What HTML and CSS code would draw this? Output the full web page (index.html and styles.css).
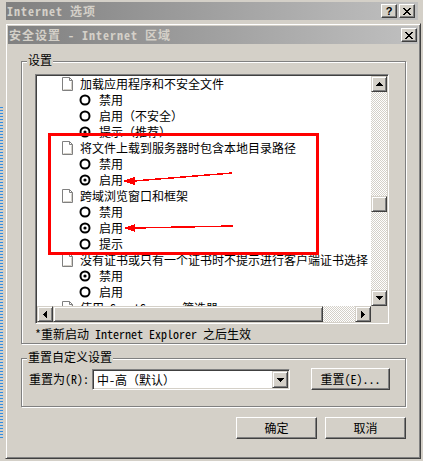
FILE: index.html
```html
<!DOCTYPE html>
<html lang="zh-CN">
<head>
<meta charset="utf-8">
<title>Internet 选项</title>
<link rel="stylesheet" href="styles.css">
</head>
<body>
<div class="screen">
  <div class="outer-title">
    <span class="cap-text">Internet 选项</span>
    <div class="cap-btns">
      <span class="cbtn help">?</span>
      <span class="cbtn"><svg width="8" height="7" viewBox="0 0 8 7"><path d="M0 0h2v1h1v1h2V1h1V0h2v1H7v1H6v1H5v1h1v1h1v1h1v1H6V6H5V5H3v1H2v1H0V6h1V5h1V4h1V3H2V2H1V1H0z" fill="#000"/></svg></span>
    </div>
  </div>
  <div class="dialog">
    <div class="title">
      <span class="cap-text">安全设置 - Internet 区域</span>
      <span class="cbtn"><svg width="8" height="7" viewBox="0 0 8 7"><path d="M0 0h2v1h1v1h2V1h1V0h2v1H7v1H6v1H5v1h1v1h1v1h1v1H6V6H5V5H3v1H2v1H0V6h1V5h1V4h1V3H2V2H1V1H0z" fill="#000"/></svg></span>
    </div>
    <div class="content">
      <div class="group g1">
        <span class="glabel">设置</span>
        <div class="listbox">
          <div class="lb-top">
            <div class="viewport">
              <div class="row item"><svg class="doc" width="11" height="14" viewBox="0 0 11 14"><path d="M0.5 0.5H7.5L10.5 3.5V13.5H0.5Z" fill="#fff" stroke="#808080"/><path d="M7.5 0.5V3.5H10.5" fill="none" stroke="#808080"/><path d="M9.5 4.5V12.5H1.5" fill="none" stroke="#d4d0c8"/></svg><span>加载应用程序和不安全文件</span></div>
              <div class="row opt"><svg class="radio" width="12" height="12" viewBox="0 0 12 12"><circle cx="6" cy="6" r="4.5" fill="#fff" stroke="#000" stroke-width="2"/></svg><span>禁用</span></div>
              <div class="row opt"><svg class="radio" width="12" height="12" viewBox="0 0 12 12"><circle cx="6" cy="6" r="4.5" fill="#fff" stroke="#000" stroke-width="2"/></svg><span>启用（不安全）</span></div>
              <div class="row opt"><svg class="radio" width="12" height="12" viewBox="0 0 12 12"><circle cx="6" cy="6" r="4.5" fill="#fff" stroke="#000" stroke-width="2"/><circle cx="6" cy="6" r="1.6" fill="#000"/></svg><span>提示（推荐）</span></div>
              <div class="row item"><svg class="doc" width="11" height="14" viewBox="0 0 11 14"><path d="M0.5 0.5H7.5L10.5 3.5V13.5H0.5Z" fill="#fff" stroke="#808080"/><path d="M7.5 0.5V3.5H10.5" fill="none" stroke="#808080"/><path d="M9.5 4.5V12.5H1.5" fill="none" stroke="#d4d0c8"/></svg><span>将文件上载到服务器时包含本地目录路径</span></div>
              <div class="row opt"><svg class="radio" width="12" height="12" viewBox="0 0 12 12"><circle cx="6" cy="6" r="4.5" fill="#fff" stroke="#000" stroke-width="2"/></svg><span>禁用</span></div>
              <div class="row opt"><svg class="radio" width="12" height="12" viewBox="0 0 12 12"><circle cx="6" cy="6" r="4.5" fill="#fff" stroke="#000" stroke-width="2"/><circle cx="6" cy="6" r="1.6" fill="#000"/></svg><span>启用</span></div>
              <div class="row item"><svg class="doc" width="11" height="14" viewBox="0 0 11 14"><path d="M0.5 0.5H7.5L10.5 3.5V13.5H0.5Z" fill="#fff" stroke="#808080"/><path d="M7.5 0.5V3.5H10.5" fill="none" stroke="#808080"/><path d="M9.5 4.5V12.5H1.5" fill="none" stroke="#d4d0c8"/></svg><span>跨域浏览窗口和框架</span></div>
              <div class="row opt"><svg class="radio" width="12" height="12" viewBox="0 0 12 12"><circle cx="6" cy="6" r="4.5" fill="#fff" stroke="#000" stroke-width="2"/></svg><span>禁用</span></div>
              <div class="row opt"><svg class="radio" width="12" height="12" viewBox="0 0 12 12"><circle cx="6" cy="6" r="4.5" fill="#fff" stroke="#000" stroke-width="2"/><circle cx="6" cy="6" r="1.6" fill="#000"/></svg><span>启用</span></div>
              <div class="row opt"><svg class="radio" width="12" height="12" viewBox="0 0 12 12"><circle cx="6" cy="6" r="4.5" fill="#fff" stroke="#000" stroke-width="2"/></svg><span>提示</span></div>
              <div class="row item"><svg class="doc" width="11" height="14" viewBox="0 0 11 14"><path d="M0.5 0.5H7.5L10.5 3.5V13.5H0.5Z" fill="#fff" stroke="#808080"/><path d="M7.5 0.5V3.5H10.5" fill="none" stroke="#808080"/><path d="M9.5 4.5V12.5H1.5" fill="none" stroke="#d4d0c8"/></svg><span>没有证书或只有一个证书时不提示进行客户端证书选择</span></div>
              <div class="row opt"><svg class="radio" width="12" height="12" viewBox="0 0 12 12"><circle cx="6" cy="6" r="4.5" fill="#fff" stroke="#000" stroke-width="2"/><circle cx="6" cy="6" r="1.6" fill="#000"/></svg><span>禁用</span></div>
              <div class="row opt"><svg class="radio" width="12" height="12" viewBox="0 0 12 12"><circle cx="6" cy="6" r="4.5" fill="#fff" stroke="#000" stroke-width="2"/></svg><span>启用</span></div>
              <div class="row item"><svg class="doc" width="11" height="14" viewBox="0 0 11 14"><path d="M0.5 0.5H7.5L10.5 3.5V13.5H0.5Z" fill="#fff" stroke="#808080"/><path d="M7.5 0.5V3.5H10.5" fill="none" stroke="#808080"/><path d="M9.5 4.5V12.5H1.5" fill="none" stroke="#d4d0c8"/></svg><span>使用 SmartScreen 筛选器</span></div>
            </div>
            <div class="vscroll">
              <span class="sbtn"><svg width="7" height="4" viewBox="0 0 7 4"><path d="M3 0h1v1h1v1h1v1h1v1H0V3h1V2h1V1h1z"/></svg></span>
              <div class="vtrack"><span class="vthumb"></span></div>
              <span class="sbtn"><svg width="7" height="4" viewBox="0 0 7 4"><path d="M0 0h7v1H6v1H5v1H4v1H3V3H2V2H1V1H0z"/></svg></span>
            </div>
          </div>
          <div class="lb-bot">
            <div class="hscroll">
              <span class="sbtn"><svg width="4" height="7" viewBox="0 0 4 7"><path d="M3 0h1v7H3V6H2V5H1V4H0V3h1V2h1V1h1z"/></svg></span>
              <span class="hthumb"></span>
              <div class="htrack"></div>
              <span class="sbtn"><svg width="4" height="7" viewBox="0 0 4 7"><path d="M0 0h1v1h1v1h1v1h1v1H3v1H2v1H1v1H0z"/></svg></span>
            </div>
            <div class="corner"></div>
          </div>
        </div>
        <div class="note">*重新启动 Internet Explorer 之后生效</div>
      </div>
      <div class="group g2">
        <span class="glabel">重置自定义设置</span>
        <div class="reset-row">
          <span class="rlabel">重置为(R):</span>
          <div class="combo">
            <span class="combo-val">中-高（默认）</span>
            <span class="sbtn dd"><svg width="7" height="4" viewBox="0 0 7 4"><path d="M0 0h7v1H6v1H5v1H4v1H3V3H2V2H1V1H0z"/></svg></span>
          </div>
          <span class="btn reset">重置(E)...</span>
        </div>
      </div>
      <div class="actions">
        <span class="btn">确定</span>
        <span class="btn">取消</span>
      </div>
    </div>
  </div>
  <svg class="annot" width="423" height="461" viewBox="0 0 423 461">
    <rect x="49.5" y="134.5" width="268" height="119" fill="none" stroke="#ff0000" stroke-width="3"/>
    <polygon points="122,181 135,177 135,185" fill="#ff0000"/>
    <path d="M134 181 L232 173" stroke="#ff0000" stroke-width="1.5" fill="none"/>
    <polygon points="124,228 135,224 135,232" fill="#ff0000"/>
    <path d="M134 228 L233 226" stroke="#ff0000" stroke-width="1.5" fill="none"/>
  </svg>
</div>
</body>
</html>
```

FILE: styles.css
```css
* { box-sizing: border-box; }
html, body { margin: 0; padding: 0; }
body {
  font-family: "Noto Sans Mono CJK SC", "Noto Sans CJK SC", "Liberation Mono", monospace;
  font-size: 12px;
  line-height: 16px;
  color: #000;
  background: #d4d0c8;
}
.screen {
  position: relative;
  width: 423px;
  height: 461px;
  overflow: hidden;
  padding-top: 2px;
  background:
    repeating-linear-gradient(180deg, #2f8de4 0 1px, transparent 1px 3px) 0 107px / 3px 333px no-repeat,
    #d4d0c8;
}
.outer-title {
  display: flex;
  align-items: center;
  justify-content: space-between;
  height: 18px;
  margin: 0 5px 0 6px;
  padding: 0 3px 0 1px;
  background: linear-gradient(90deg, #808080, #c0c0c0);
}
.cap-text {
  color: #d4d0c8;
  font-weight: bold;
  letter-spacing: 1px;
  white-space: nowrap;
  line-height: 18px;
}
.cap-btns { display: flex; gap: 2px; }
.cbtn {
  width: 16px;
  height: 14px;
  display: flex;
  align-items: center;
  justify-content: center;
  background: #d4d0c8;
  border: 1px solid;
  border-color: #fff #404040 #404040 #fff;
  box-shadow: inset -1px -1px #808080;
  font: bold 11px/12px "Liberation Sans", sans-serif;
  color: #000;
}
.dialog {
  margin: 3px 0 0 5px;
  width: 416px;
  height: 436px;
  border: 1px solid;
  border-color: #d4d0c8 #404040 #404040 #d4d0c8;
  box-shadow: inset 1px 1px #fff, inset -1px -1px #808080;
  padding: 2px;
}
.title {
  display: flex;
  align-items: center;
  justify-content: space-between;
  height: 18px;
  padding: 0 1px 0 1px;
  background: linear-gradient(90deg, #808080, #c0c0c0);
}
.group {
  position: relative;
  margin-left: 13px;
  width: 385px;
  border: 1px solid #808080;
  box-shadow: inset 1px 1px #fff, 1px 1px #fff;
}
.glabel {
  position: absolute;
  top: -8px;
  left: 5px;
  padding: 0 1px;
  line-height: 12px;
  background: #d4d0c8;
  white-space: nowrap;
}
.g1 { margin-top: 17px; height: 283px; padding: 12px 0 0 13px; }
.listbox {
  width: 354px;
  height: 250px;
  border: 1px solid;
  border-color: #808080 #fff #fff #808080;
  box-shadow: inset 1px 1px #404040, inset -1px -1px #d4d0c8;
  padding: 1px;
}
.lb-top { display: flex; height: 230px; }
.viewport { flex: 1; background: #fff; overflow: hidden; white-space: nowrap; }
.row { height: 16px; display: flex; align-items: center; line-height: 16px; }
.row.item { padding-left: 25px; }
.row.opt { padding-left: 42px; }
.doc { flex: none; margin-right: 7px; }
.radio { flex: none; margin-right: 8px; }
.vscroll { width: 16px; display: flex; flex-direction: column; }
.sbtn {
  width: 16px;
  height: 16px;
  flex: none;
  display: flex;
  align-items: center;
  justify-content: center;
  background: #d4d0c8;
  border: 1px solid;
  border-color: #d4d0c8 #404040 #404040 #d4d0c8;
  box-shadow: inset 1px 1px #fff, inset -1px -1px #808080;
}
.sbtn svg { fill: #000; }
.vtrack, .htrack {
  flex: 1;
  background: repeating-conic-gradient(#d4d0c8 0 25%, #fff 0 50%) 0 0 / 2px 2px;
}
.vthumb, .hthumb {
  display: block;
  background: #d4d0c8;
  border: 1px solid;
  border-color: #d4d0c8 #404040 #404040 #d4d0c8;
  box-shadow: inset 1px 1px #fff, inset -1px -1px #808080;
}
.vthumb { width: 16px; height: 16px; margin-top: 104px; }
.lb-bot { display: flex; height: 16px; }
.hscroll { flex: 1; display: flex; }
.hthumb { width: 270px; height: 16px; flex: none; }
.corner { width: 16px; background: #d4d0c8; }
.note { margin-top: 3px; line-height: 14px; white-space: nowrap; }
.g2 { margin-top: 14px; height: 49px; }
.reset-row {
  display: flex;
  align-items: flex-start;
  padding: 9px 0 0 7px;
}
.rlabel { width: 58px; margin-right: 5px; line-height: 22px; white-space: nowrap; }
.combo {
  margin-top: 1px;
  width: 198px;
  height: 21px;
  display: flex;
  align-items: stretch;
  background: #fff;
  border: 1px solid;
  border-color: #808080 #fff #fff #808080;
  box-shadow: inset 1px 1px #404040, inset -1px -1px #d4d0c8;
  padding: 1px;
}
.combo-val { flex: 1; padding-left: 3px; line-height: 17px; white-space: nowrap; }
.combo .dd { height: 17px; }
.btn {
  display: flex;
  align-items: center;
  justify-content: center;
  height: 22px;
  width: 81px;
  background: #d4d0c8;
  border: 1px solid;
  border-color: #fff #404040 #404040 #fff;
  box-shadow: inset -1px -1px #808080;
  white-space: nowrap;
}
.reset { width: 79px; margin-left: 21px; }
.actions {
  display: flex;
  justify-content: flex-end;
  gap: 8px;
  margin-top: 10px;
  padding-right: 12px;
}
.annot { position: absolute; left: 0; top: 0; pointer-events: none; shape-rendering: crispEdges; }
```
